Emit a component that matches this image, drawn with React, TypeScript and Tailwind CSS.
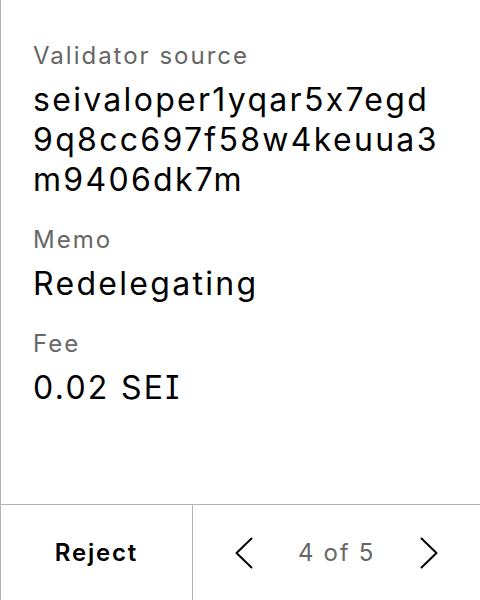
const fields = [
  { label: "Validator source", value: "seivaloper1yqar5x7egd9q8cc697f58w4keuua3m9406dk7m" },
  { label: "Memo", value: "Redelegating" },
  { label: "Fee", value: "0.02 SEI" },
];

function Chevron({ dir }: { dir: "left" | "right" }) {
  return (
    <svg width="18" height="32" viewBox="0 0 18 32" fill="none" stroke="currentColor" strokeWidth="2" strokeLinecap="round" strokeLinejoin="round">
      {dir === "left" ? <polyline points="16.5,1.5 1.5,16 16.5,30.5" /> : <polyline points="1.5,1.5 16.5,16 1.5,30.5" />}
    </svg>
  );
}

export default function App() {
  return (
    <div className="flex h-[600px] w-[480px] flex-col border-l border-[#b3b3b3] bg-white font-['Inter','Noto_Sans',sans-serif] text-black [font-feature-settings:'calt'_0,'cv08'_1]">
      <div className="flex flex-1 flex-col gap-6 px-8 pt-10">
        {fields.map(({ label, value }) => (
          <div key={label} className="flex flex-col gap-2">
            <span className="text-[24px] leading-8 tracking-[2px] text-[#666666]">{label}</span>
            <span className="break-all text-[32px] leading-10 tracking-[2.3px]">{value}</span>
          </div>
        ))}
      </div>

      <div className="flex h-[96px] border-t border-[#b3b3b3]">
        <button className="w-[192px] border-r border-[#b3b3b3] text-[24px] font-semibold tracking-[1.8px]">
          Reject
        </button>
        <div className="flex flex-1 items-center justify-between pl-[42px] pr-[42px]">
          <Chevron dir="left" />
          <span className="text-[24px] tracking-[1.7px] text-[#666666]">4 of 5</span>
          <Chevron dir="right" />
        </div>
      </div>
    </div>
  );
}
